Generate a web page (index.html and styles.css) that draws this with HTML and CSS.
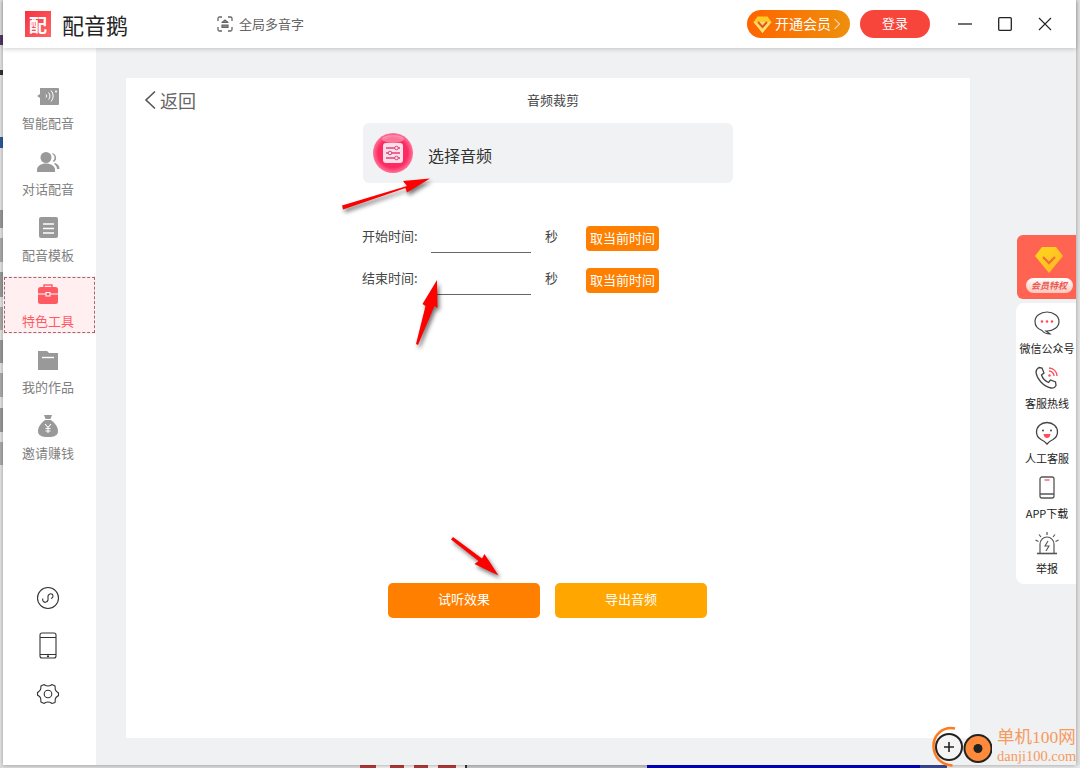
FILE: index.html
```html
<!DOCTYPE html>
<html>

<head>
    <meta charset="utf-8">
    <title>配音鹅</title>
    <link rel="stylesheet" href="styles.css">
</head>

<body>
    <div class="app">
        <header class="titlebar">
            <div class="logo"><span class="logo-text">配</span></div>
            <div class="app-name">配音鹅</div>
            <div class="polyphone">
                <svg width="16" height="16" viewBox="0 0 16 16" fill="none" stroke="#666" stroke-width="1.3">
                    <path d="M1 5V2.5C1 1.6 1.6 1 2.5 1H5M11 1h2.500C14.400 1 15 1.600 15 2.500V5M15 11v2.500C15 14.400 14.400 15 13.500 15H11M5 15H2.500C1.600 15 1 14.400 1 13.500V11"/>
                    <path d="M4.500 6.500h7M5 6.500l3-2.500 3 2.500M5 9h6v2.500H5z" stroke-width="1.200" fill="#888"/>
                </svg>
                <span>全局多音字</span>
            </div>
            <div class="titlebar-right">
                <div class="vip-btn">
                    <svg width="19" height="19" viewBox="0 0 19 19">
                        <path d="M4.500 1.500h10l4 5.500L9.500 18 .5 7z" fill="#ffc928"/>
                        <path d="M.5 7h18L9.500 18z" fill="#ffdf6a"/>
                        <path d="M5 7l4.500 5L14 7" fill="none" stroke="#e8542a" stroke-width="2"/>
                    </svg>
                    <span>开通会员</span>
                    <svg width="6" height="12" viewBox="0 0 6 12" fill="none" stroke="#fff" stroke-width="1">
                        <path d="M.5 1l5 5-5 5"/>
                    </svg>
                </div>
                <div class="login-btn">登录</div>
                <div class="win-controls">
                    <svg width="14" height="14" viewBox="0 0 14 14" fill="none" stroke="#222" stroke-width="1.300">
                        <path d="M0 7h14"/>
                    </svg>
                    <svg width="14" height="14" viewBox="0 0 14 14" fill="none" stroke="#222" stroke-width="1.300">
                        <rect x=".7" y=".7" width="12.600" height="12.600" rx="1"/>
                    </svg>
                    <svg width="14" height="14" viewBox="0 0 14 14" fill="none" stroke="#222" stroke-width="1.100">
                        <path d="M1 1l12 12M13 1L1 13"/>
                    </svg>
                </div>
            </div>
        </header>

        <div class="body-row">
            <nav class="sidebar">
                <div class="nav-list">
                    <div class="nav-item">
                        <svg width="24" height="22" viewBox="0 0 24 22">
                            <path d="M4 3h18a1 1 0 0 1 1 1v15a1 1 0 0 1-1 1H4V13L1 11l3-2z" fill="#999"/>
                            <path d="M10 9.500a2 2 0 0 1 0 3M12.500 7.500a5 5 0 0 1 0 7M15 5.500a8 8 0 0 1 0 11" fill="none" stroke="#fff" stroke-width="1"/>
                            <circle cx="20" cy="6.500" r="1" fill="#fff"/>
                        </svg>
                        <span>智能配音</span>
                    </div>
                    <div class="nav-item">
                        <svg width="24" height="22" viewBox="0 0 24 22" fill="#999">
                            <circle cx="10" cy="6.500" r="5.500"/>
                            <path d="M1 21v-2c0-4 4-6.500 9-6.500s9 2.500 9 6.500v2z"/>
                            <path d="M16 2a5 5 0 0 1 2 9l-1.500-1a4 4 0 0 0 0-7zM19 12c3 1 4.500 3 4.500 6h-2.500c0-2-1-4-3-5z"/>
                        </svg>
                        <span>对话配音</span>
                    </div>
                    <div class="nav-item">
                        <svg width="24" height="22" viewBox="0 0 24 22">
                            <rect x="3" y="0" width="19" height="21" rx="2" fill="#999"/>
                            <path d="M7 7h11M7 11.500h11M7 16h11" stroke="#fff" stroke-width="1.400"/>
                        </svg>
                        <span>配音模板</span>
                    </div>
                    <div class="nav-item active">
                        <svg width="24" height="22" viewBox="0 0 24 22">
                            <path d="M8 5V2h8v3" fill="none" stroke="#ff5a64" stroke-width="1.400"/>
                            <rect x="2" y="4" width="20" height="17" rx="2.500" fill="#ff5a64"/>
                            <path d="M2 11h20" stroke="#fff" stroke-width="1"/>
                            <rect x="10" y="9.500" width="4" height="3.500" fill="#ff5a64" stroke="#fff" stroke-width="1"/>
                        </svg>
                        <span>特色工具</span>
                    </div>
                    <div class="nav-item">
                        <svg width="24" height="22" viewBox="0 0 24 22">
                            <path d="M2 2h9l2 2h9v17H2z" fill="#999"/>
                            <path d="M6 8.500h12" stroke="#fff" stroke-width="1.400"/>
                        </svg>
                        <span>我的作品</span>
                    </div>
                    <div class="nav-item">
                        <svg width="24" height="22" viewBox="0 0 24 22">
                            <path d="M8 0h8l-1.500 4h-5z" fill="#999"/>
                            <path d="M9 5h6c4 3 7 7 7 11 0 4-3 6-10 6S2 20 2 16c0-4 3-8 7-11z" fill="#999"/>
                            <path d="M9 9l3 3.500L15 9M12 12.500V18M9.500 13.500h5M9.500 16h5" fill="none" stroke="#fff" stroke-width="1.100"/>
                        </svg>
                        <span>邀请赚钱</span>
                    </div>
                </div>
                <div class="nav-bottom">
                    <svg width="24" height="24" viewBox="0 0 24 24" fill="none" stroke="#333" stroke-width="1.100">
                        <circle cx="12" cy="12" r="10.500"/>
                        <path d="M8 16a2.500 2.500 0 0 1-1-3.500M7.500 15.500c1.500 1.500 4 .5 4.500-1.500v-4c.5-2 3-3 4.500-1.500 1 1.500.5 3.500-1.500 4"/>
                    </svg>
                    <svg width="24" height="28" viewBox="0 0 18 28" fill="none" stroke="#333" stroke-width="1.100">
                        <rect x="1" y="1" width="16" height="25" rx="2"/>
                        <path d="M1 5.500h16M1 22.500h16"/>
                        <circle cx="9" cy="24.300" r=".6" fill="#333"/>
                    </svg>
                    <svg width="24" height="24" viewBox="0 0 24 24" fill="none" stroke="#333" stroke-width="1.100">
                        <path d="M8 2.500c1 .5 1.500 1.500 4 1.500s3-1 4-1.500l3 1.500c.5 1-.3 2 .5 4s2 2 3 3v2.500c-1 1-2.200 1-3 3s0 3-.5 4L16 21.500c-1-.5-1.500-1.500-4-1.500s-3 1-4 1.500L5 20c-.5-1 .3-2-.5-4s-2-2-3-3v-2.500c1-1 2.200-1 3-3S4.500 5 5 4z"/>
                        <circle cx="12" cy="12" r="3.800"/>
                    </svg>
                </div>
            </nav>

            <main class="content">
                <section class="card">
                    <div class="card-head">
                        <div class="back">
                            <svg width="12" height="20" viewBox="0 0 12 20" fill="none" stroke="#555" stroke-width="1.600">
                                <path d="M11 1.500L2 10l9 8.500"/>
                            </svg>
                            <span>返回</span>
                        </div>
                        <div class="card-title">音频裁剪</div>
                    </div>

                    <div class="picker">
                        <svg width="40" height="40" viewBox="0 0 40 40">
                            <defs>
                                <radialGradient id="ball" cx="50%" cy="50%" r="52%">
                                    <stop offset="0" stop-color="#ff2f66"/>
                                    <stop offset=".7" stop-color="#fb2a60"/>
                                    <stop offset="1" stop-color="#ff7ea2"/>
                                </radialGradient>
                            </defs>
                            <circle cx="20" cy="20" r="20" fill="url(#ball)"/>
                            <ellipse cx="20" cy="6" rx="11" ry="4" fill="#fff" opacity=".35"/>
                            <rect x="10" y="10" width="20" height="20" rx="3" fill="#f8dfe8"/>
                            <path d="M13 15h14M13 20h14M13 25h14" stroke="#e0447a" stroke-width="1.400"/>
                            <circle cx="23.500" cy="15" r="1.800" fill="#f8dfe8" stroke="#e0447a"/>
                            <circle cx="17" cy="20" r="1.800" fill="#f8dfe8" stroke="#e0447a"/>
                            <circle cx="23.500" cy="25" r="1.800" fill="#f8dfe8" stroke="#e0447a"/>
                        </svg>
                        <span>选择音频</span>
                    </div>

                    <div class="time-rows">
                        <div class="time-row">
                            <label class="time-label">开始时间:</label>
                            <div class="time-input"></div>
                            <span class="time-unit">秒</span>
                            <div class="take-btn">取当前时间</div>
                        </div>
                        <div class="time-row">
                            <label class="time-label">结束时间:</label>
                            <div class="time-input"></div>
                            <span class="time-unit">秒</span>
                            <div class="take-btn">取当前时间</div>
                        </div>
                    </div>

                    <div class="actions">
                        <div class="action-btn listen">试听效果</div>
                        <div class="action-btn export">导出音频</div>
                    </div>
                </section>
            </main>
        </div>
    </div>

    <!-- floating panel on the right edge -->
    <aside class="float-panel">
        <div class="vip-card">
            <svg width="28" height="26" viewBox="0 0 28 26">
                <defs>
                    <linearGradient id="gem" x1="0" y1="0" x2="1" y2="1">
                        <stop offset="0" stop-color="#ffd91f"/>
                        <stop offset="1" stop-color="#ffb41f"/>
                    </linearGradient>
                </defs>
                <path d="M7 0h14l7 9-14 17L0 9z" fill="url(#gem)"/>
                <path d="M8 10l6 6 6-6" fill="none" stroke="#f0703c" stroke-width="2.400"/>
            </svg>
            <div class="vip-tag">会员特权</div>
        </div>
        <div class="service-list">
            <div class="service-item">
                <svg width="26" height="24" viewBox="0 0 26 24" fill="none" stroke="#444" stroke-width="1.200">
                    <path d="M13 1c6.600 0 12 3.900 12 9.500S19.600 20 13 20h-1l4 3c-3 0-6-1-8-3.500C4 18 1 15 1 10.500 1 4.900 6.400 1 13 1z"/>
                    <circle cx="8" cy="10.500" r="1.300" fill="#ff4d5a" stroke="none"/>
                    <circle cx="13" cy="10.500" r="1.300" fill="#ff4d5a" stroke="none"/>
                    <circle cx="18" cy="10.500" r="1.300" fill="#ff4d5a" stroke="none"/>
                </svg>
                <span>微信公众号</span>
            </div>
            <div class="service-item">
                <svg width="26" height="24" viewBox="0 0 26 24" fill="none" stroke="#444" stroke-width="1.300">
                    <path d="M5 1.500l3 .5 2 5-2.500 2c1 3 3.500 6 7 7.500l2-2.500 5 2 .5 3.500c-1 2-3 3-5 2.500C9 20 3 13 2 6.500 2 4 3 2.500 5 1.500z"/>
                    <path d="M15 5a5 5 0 0 1 5 5M15 2a8 8 0 0 1 8 8" stroke="#ff4d5a"/>
                    <circle cx="15.500" cy="9.500" r="1.200" fill="#ff4d5a" stroke="none"/>
                </svg>
                <span>客服热线</span>
            </div>
            <div class="service-item">
                <svg width="26" height="24" viewBox="0 0 26 24" fill="none" stroke="#444" stroke-width="1.300">
                    <path d="M13 23c-1.500-2-3-3-6-4.500C3.500 16.500 2.500 14 2.500 11 2.500 5.500 7 1.500 13 1.500S23.500 5.500 23.500 11c0 3-1 5.500-4.500 7.500-3 1.500-4.500 2.500-6 4.500z"/>
                    <circle cx="9" cy="9.500" r="1" fill="#444" stroke="none"/>
                    <circle cx="17" cy="9.500" r="1" fill="#444" stroke="none"/>
                    <path d="M9.500 13h7c-.5 3-2 4-3.500 4s-3-1-3.500-4z" fill="#ff4d5a" stroke="none"/>
                </svg>
                <span>人工客服</span>
            </div>
            <div class="service-item">
                <svg width="26" height="24" viewBox="0 0 26 24" fill="none" stroke="#555" stroke-width="1.300">
                    <rect x="6" y="1" width="14" height="21" rx="2"/>
                    <path d="M6 18h14" stroke-width="1.500"/>
                    <path d="M10.500 4h5" stroke="#ff4d5a" stroke-width="1.300"/>
                </svg>
                <span>APP下载</span>
            </div>
            <div class="service-item">
                <svg width="26" height="24" viewBox="0 0 26 24" fill="none" stroke="#555" stroke-width="1.200">
                    <path d="M6 22V13a7 7 0 0 1 14 0v9"/>
                    <path d="M3 22.500h20" stroke-width="1.600"/>
                    <path d="M14 10l-3 5h4l-3 5" stroke-width="1.100"/>
                    <path d="M13 1v3M5 3.500L7 6M21 3.500L19 6M1.500 9l3 1.500M24.500 9l-3 1.500"/>
                </svg>
                <span>举报</span>
            </div>
        </div>
    </aside>

    <!-- red arrows drawn over the screenshot -->
    <svg class="arrows" width="1080" height="768" viewBox="0 0 1080 768" fill="#f00">
        <path d="M342 205.500L407 186l-4-5 27-2.500-23 14-1.500-4.500L343 209.500z"/>
        <path d="M416 344L425.500 306l-3 -2 14.500-24 .5 28-3-2-16.500 39z"/>
        <path d="M453 537L482 558.500l2.500-4.500 14 21.500-24-11.500 4-3L451 539.500z"/>
    </svg>

    <!-- site watermark -->
    <div class="watermark">
        <svg width="60" height="42" viewBox="0 0 60 42">
            <path d="M23 2.500C11 0 1 9 1.500 21c.5 10 8 18 19 18.500" fill="none" stroke="#ff7a1a" stroke-width="2.500"/>
            <circle cx="17" cy="21" r="13" fill="#f4f4f4" stroke="#222" stroke-width="2"/>
            <path d="M12 21h10M17 16v10" stroke="#222" stroke-width="1.600"/>
            <circle cx="46" cy="22.500" r="13.500" fill="#ff8a3c" stroke="#222" stroke-width="2"/>
            <circle cx="46" cy="22.500" r="4.500" fill="#222"/>
        </svg>
        <div class="watermark-text">
            <div class="watermark-name">单机100网</div>
            <div class="watermark-url">danji100.com</div>
        </div>
    </div>
</body>

</html>
```

FILE: styles.css
```css
* {
    box-sizing: border-box;
}

html,
body {
    height: 100%;
}

body {
    margin: 0;
    overflow: hidden;
    font-family: "Noto Sans CJK SC", "Liberation Sans", sans-serif;
    color: #333;
    background-color: #e2e2e2;
    /* bits of the desktop around the window */
    background-image:
        linear-gradient(90deg, #dcdcdc 0, #dcdcdc 360px, #b53a3a 360px, #b53a3a 376px, #f4eeee 376px, #f4eeee 390px, #b53a3a 390px, #b53a3a 404px, #f4eeee 404px, #f4eeee 414px, #b53a3a 414px, #b53a3a 428px, #f4eeee 428px, #f4eeee 438px, #b53a3a 438px, #b53a3a 456px, #f4eeee 456px, #f4eeee 465px, #333 465px, #333 467px, #c8c8c8 467px, #c8c8c8 647px, #0000c8 647px, #0000c8 920px, #3a4a9c 920px, #3a4a9c 947px, #e8e8e8 947px),
        linear-gradient(180deg, #e2e2e2 0, #e2e2e2 35px, #553a6a 35px, #553a6a 45px, #e2e2e2 45px, #e2e2e2 70px, #333 70px, #333 75px, #e2e2e2 75px, #e2e2e2 137px, #2a5a9a 137px, #2a5a9a 148px, #e2e2e2 148px, #e2e2e2 210px, #999 210px, #999 228px, #e2e2e2 228px, #e2e2e2 238px, #aaa 238px, #aaa 262px, #e2e2e2 262px, #e2e2e2 272px, #999 272px, #999 297px, #e2e2e2 297px, #e2e2e2 307px, #aaa 307px, #aaa 330px, #e2e2e2 330px, #e2e2e2 340px, #999 340px, #999 363px, #e2e2e2 363px, #e2e2e2 373px, #aaa 373px, #aaa 397px, #e2e2e2 397px, #e2e2e2 408px, #999 408px, #999 432px, #e2e2e2 432px, #e2e2e2 442px, #aaa 442px, #aaa 465px, #e2e2e2 465px);
    background-size: 100% 3px, 3px 100%;
    background-position: 0 100%, 0 0;
    background-repeat: no-repeat;
}

.app {
    width: 1073px;
    height: 765px;
    margin-left: 3px;
    display: flex;
    flex-direction: column;
    background-color: #f0f1f3;
    box-shadow: 0 0 4px rgba(0, 0, 0, 0.35);
}

/* title bar */
.titlebar {
    height: 48px;
    flex-shrink: 0;
    display: flex;
    align-items: center;
    padding-left: 22px;
    background-color: #fff;
    box-shadow: 0 1px 5px rgba(0, 0, 0, 0.2);
    position: relative;
}

.logo {
    width: 26px;
    height: 26px;
    display: flex;
    align-items: center;
    justify-content: center;
    background: linear-gradient(135deg, #f5333f, #ff6468);
}

.logo-text {
    color: #fff;
    font-size: 18px;
    font-weight: 700;
    line-height: 1;
}

.app-name {
    margin-left: 11px;
    font-size: 22px;
    color: #222;
}

.polyphone {
    margin-left: 89px;
    display: flex;
    align-items: center;
    gap: 6px;
    font-size: 13px;
    color: #666;
}

.polyphone span {
    padding-bottom: 2px;
}

.titlebar-right {
    margin-left: auto;
    display: flex;
    align-items: center;
}

.vip-btn {
    width: 103px;
    height: 28px;
    padding-left: 6px;
    display: flex;
    align-items: center;
    gap: 3px;
    border-radius: 14px;
    color: #fff;
    font-size: 14px;
    background: linear-gradient(90deg, #ff6400, #ee8f0c);
}

.vip-btn span {
    padding-bottom: 2px;
}

.login-btn {
    width: 70px;
    height: 28px;
    margin-left: 10px;
    border-radius: 14px;
    background-color: #f8453b;
    color: #fff;
    font-size: 13px;
    line-height: 26px;
    text-align: center;
}

.win-controls {
    display: flex;
    align-items: center;
    gap: 26px;
    margin-left: 28px;
    margin-right: 24px;
}

.win-controls svg {
    display: block;
}

/* sidebar + content */
.body-row {
    flex: 1;
    min-height: 0;
    display: flex;
}

.sidebar {
    width: 93px;
    flex-shrink: 0;
    display: flex;
    flex-direction: column;
    justify-content: space-between;
    padding: 30px 0 59px;
    background-color: #fff;
}

.nav-list {
    display: flex;
    flex-direction: column;
    gap: 8px;
}

.nav-item {
    height: 58px;
    display: flex;
    flex-direction: column;
    align-items: center;
    justify-content: flex-end;
    gap: 7px;
    padding: 0 3px 4px 0;
    font-size: 13px;
    line-height: 18px;
    color: #808080;
}

.nav-item svg {
    display: block;
}

.nav-item.active {
    color: #ff5a64;
    background-color: #ffeff0;
    outline: 1px dashed #9a6a70;
    outline-offset: -2px;
}

.nav-bottom {
    display: flex;
    flex-direction: column;
    align-items: center;
    gap: 22px;
    padding-right: 3px;
}

.nav-bottom svg {
    display: block;
}

.content {
    flex: 1;
    min-width: 0;
    padding: 30px 0 27px 30px;
}

.card {
    width: 844px;
    height: 660px;
    display: flex;
    flex-direction: column;
    background-color: #fff;
}

.card-head {
    height: 45px;
    display: flex;
    align-items: center;
    padding: 0 0 2px 18px;
}

.back {
    width: 52px;
    display: flex;
    align-items: center;
    gap: 4px;
    font-size: 18px;
    color: #666;
}

.card-title {
    margin-left: 331px;
    font-size: 13px;
    color: #444;
}

.picker {
    width: 370px;
    height: 60px;
    margin-left: 237px;
    padding-left: 10px;
    display: flex;
    align-items: center;
    gap: 15px;
    border-radius: 6px;
    background-color: #f1f2f4;
    font-size: 16px;
    color: #333;
}

.picker span {
    padding-top: 4px;
}

.time-rows {
    margin-top: 43px;
    margin-left: 236px;
    display: flex;
    flex-direction: column;
    gap: 17px;
}

.time-row {
    height: 25px;
    display: flex;
    align-items: center;
    font-size: 13px;
    color: #444;
}

.time-label {
    width: 69px;
    margin-bottom: 6px;
}

.time-input {
    width: 100px;
    height: 27px;
    margin-top: 1px;
    border-bottom: 1px solid #666;
}

.time-unit {
    margin-left: 14px;
    width: 41px;
    margin-bottom: 6px;
}

.take-btn {
    width: 73px;
    height: 25px;
    border-radius: 4px;
    background-color: #ff7f00;
    color: #fff;
    line-height: 24px;
    text-align: center;
}

.actions {
    margin-top: 290px;
    margin-left: 262px;
    display: flex;
    gap: 15px;
}

.action-btn {
    width: 152px;
    height: 35px;
    border-radius: 5px;
    color: #fff;
    font-size: 13px;
    line-height: 32px;
    text-align: center;
}

.listen {
    background-color: #ff7f00;
}

.export {
    background-color: #ffa600;
}

/* floating panel */
.float-panel {
    position: absolute;
    left: 1016px;
    top: 235px;
    width: 60px;
}

.vip-card {
    height: 64px;
    margin-left: 1px;
    display: flex;
    flex-direction: column;
    align-items: center;
    padding: 12px 0 0 5px;
    gap: 5px;
    border-radius: 6px 0 0 6px;
    background-color: #ff6452;
}

.vip-card svg {
    display: block;
}

.vip-tag {
    width: 47px;
    height: 15px;
    flex-shrink: 0;
    border-radius: 8px;
    background: linear-gradient(180deg, #fff, #ffc4bd);
    color: #e85a50;
    font-size: 9px;
    font-style: italic;
    font-weight: 700;
    line-height: 15px;
    text-align: center;
}

.service-list {
    margin-top: 4px;
    height: 281px;
    padding: 8px 0 0 2px;
    border-radius: 8px 0 0 8px;
    background-color: #fff;
}

.service-item {
    height: 55px;
    display: flex;
    flex-direction: column;
    align-items: center;
    gap: 6px;
    font-size: 11px;
    line-height: 14px;
    color: #222;
}

.service-item svg {
    display: block;
}

/* overlays */
.arrows {
    position: absolute;
    left: 0;
    top: 0;
    pointer-events: none;
    filter: drop-shadow(2px 3px 2px rgba(0, 0, 0, 0.55));
}

.watermark {
    position: absolute;
    left: 932px;
    top: 726px;
    display: flex;
}

.watermark svg {
    display: block;
}

.watermark-text {
    margin-left: 5px;
    color: #f79a5c;
}

.watermark-name {
    font-family: "Liberation Serif", "Noto Sans CJK SC", serif;
    font-size: 17.500px;
    line-height: 23px;
    white-space: nowrap;
}

.watermark-url {
    font-family: "Liberation Serif", serif;
    font-size: 14.500px;
    line-height: 14px;
    white-space: nowrap;
}
```
